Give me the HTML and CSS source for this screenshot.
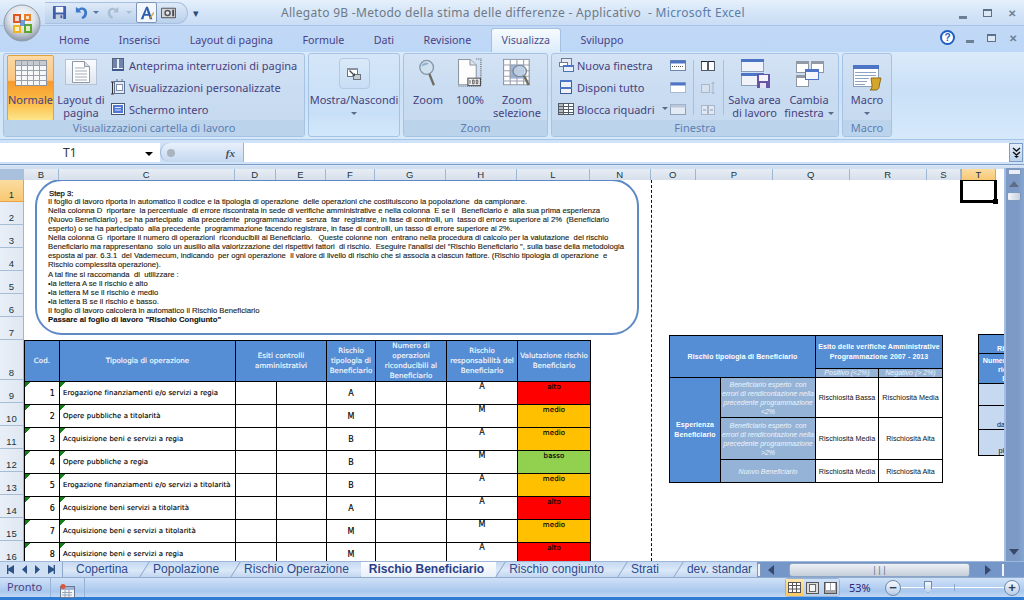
FILE: index.html
```html
<!DOCTYPE html>
<html lang="it">
<head>
<meta charset="utf-8">
<title>Microsoft Excel</title>
<link rel="stylesheet" href="styles.css">
</head>
<body>
<div class="window">
  <div class="officebtn">
    <svg width="38" height="38" viewBox="0 0 38 38"><defs><radialGradient id="orb" cx="50%" cy="35%" r="65%"><stop offset="0" stop-color="#fbfcfe"/><stop offset=".55" stop-color="#dfe4ea"/><stop offset="1" stop-color="#8b97a6"/></radialGradient></defs><circle cx="19" cy="19" r="18" fill="url(#orb)" stroke="#8d9bad"/><rect x="10" y="10" width="8" height="9" fill="#e2571e"/><rect x="12" y="12" width="4" height="5" fill="#f5d9c8"/><rect x="21" y="10" width="7" height="7" fill="#e8802a"/><rect x="23" y="12" width="3" height="3" fill="#fbe3c0"/><rect x="10" y="21" width="8" height="8" fill="#f3b21e"/><rect x="12" y="23" width="4" height="4" fill="#fdf1c6"/><rect x="21" y="20" width="8" height="9" fill="#5fa52e"/><rect x="23" y="22" width="4" height="5" fill="#dcefc4"/><rect x="17" y="16" width="5" height="6" fill="#3b78c9" opacity=".7"/></svg>
  </div>
  <header class="titlebar">
    <div class="qat">
      <svg class="qicon" width="15" height="15" viewBox="0 0 16 16"><rect x="1" y="1" width="14" height="14" rx="1" fill="#3f5fae"/><rect x="4" y="2" width="8" height="6" fill="#f4f6fb"/><rect x="4" y="10" width="8" height="5" fill="#c6cede"/><rect x="9" y="11" width="2" height="3" fill="#3f5fae"/></svg>
      <svg class="qicon undo" width="15" height="15" viewBox="0 0 16 16"><path d="M2 2v6h6L6 6c2-2 5-1 5 2 0 2-1 4-3 5l1 2c4-1 5-4 5-7 0-5-6-7-9-4z" fill="#3e78c8"/></svg>
      <span class="drop"></span>
      <svg class="qicon redo" width="14" height="15" viewBox="0 0 16 16"><path d="M14 2v6H8l2-2C8 4 5 5 5 8c0 2 1 4 3 5l-1 2C3 14 2 11 2 8c0-5 6-7 9-4z" fill="#a9bdd3"/></svg>
      <span class="drop dimdrop"></span>
      <span class="qframe"><svg width="18" height="18" viewBox="0 0 20 20"><path d="M3 17L9 3h2l5 14h-3l-1-4H7l-1 4z M8 11h3L9.600 6z" fill="#2e5fae" fill-rule="evenodd"/><path d="M13 15l4-6 1 1-4 6z" fill="#d9a32b"/></svg></span>
      <svg class="qicon" width="17" height="15" viewBox="0 0 18 16"><rect x="1" y="3" width="16" height="11" rx="1" fill="#55585e"/><rect x="2" y="4" width="14" height="9" fill="#d4d6d8"/><circle cx="8" cy="8.500" r="3.500" fill="#55585e"/><circle cx="8" cy="8.500" r="1.800" fill="#e7eaee"/><rect x="13" y="5" width="2" height="7" fill="#45484e"/></svg>
    </div>
    <span class="qatmore">▾</span>
    <h1 class="doctitle">Allegato 9B -Metodo della stima delle differenze - Applicativo &nbsp;- <span class="appname">Microsoft Excel</span></h1>
    <div class="winctl">
      <span class="wmin"></span><span class="wmax"></span><span class="wclose">✕</span>
    </div>
  </header>
  <nav class="tabs">
    <span class="tab">Home</span>
    <span class="tab">Inserisci</span>
    <span class="tab">Layout di pagina</span>
    <span class="tab">Formule</span>
    <span class="tab">Dati</span>
    <span class="tab">Revisione</span>
    <span class="tab active">Visualizza</span>
    <span class="tab">Sviluppo</span>
    <div class="docctl">
      <span class="help">?</span><span class="wmin"></span><span class="wmax"></span><span class="wclose">✕</span>
    </div>
  </nav>
  <section class="ribbon">
    <div class="group g1">
      <div class="gbody">
        <div class="big normal">
          <svg width="36" height="30" viewBox="0 0 36 30"><rect x="2.500" y=".5" width="31" height="25" fill="#f6f7f9" stroke="#8c939c"/><rect x="3" y="1" width="30" height="4" fill="#c6cbd2"/><path d="M2.500 5.500h31M2.500 10.500h31M2.500 15.500h31M2.500 20.500h31M8.500 0v26M14.500 0v26M20.500 0v26M26.500 0v26" stroke="#9aa1ab" fill="none"/></svg>
          <span>Normale</span>
        </div>
        <div class="big layoutp">
          <span class="pgframe"><svg width="18" height="22" viewBox="0 0 18 22"><path d="M.5.5h12l5 5v16H.5z" fill="#fff" stroke="#8f98a6"/><path d="M12.500.5v5h5" fill="#d9dee5" stroke="#8f98a6"/><path d="M3 7h10M3 10h12M3 13h12M3 16h12M3 19h12" stroke="#a5adb9"/></svg></span>
          <span>Layout di<br>pagina</span>
        </div>
        <div class="stack">
          <div class="sm"><svg width="16" height="16" viewBox="0 0 16 16"><rect x="2.500" y="1.500" width="11" height="12" fill="#e9edf2" stroke="#56617a"/><rect x="3" y="2" width="4" height="9" fill="#6d85ad"/><rect x="9" y="2" width="4" height="9" fill="#6d85ad"/><rect x="2" y="12" width="12" height="2" fill="#3f5a8c"/></svg><span>Anteprima interruzioni di pagina</span></div>
          <div class="sm"><svg width="16" height="16" viewBox="0 0 16 16"><rect x="4.500" y="2.500" width="10" height="12" fill="#e5ebf4" stroke="#5c7195"/><rect x="6.500" y="5.500" width="6" height="6" fill="#fff" stroke="#7f90ad"/><path d="M1 3h3M1 15h3M2.500 3v12" stroke="#333" fill="none"/><path d="M7 0v2M12 0v2" stroke="#5c7195"/></svg><span>Visualizzazioni personalizzate</span></div>
          <div class="sm"><svg width="16" height="16" viewBox="0 0 16 16"><rect x="1.500" y="2.500" width="13" height="11" fill="#fff" stroke="#47586f"/><rect x="3" y="4" width="10" height="8" fill="#5178d6"/><path d="M5 6.500h6M5 9h6" stroke="#dbe5fb"/></svg><span>Schermo intero</span></div>
        </div>
      </div>
      <div class="glabel">Visualizzazioni cartella di lavoro</div>
    </div>
    <div class="group g2">
      <div class="gbody">
        <div class="big mostra">
          <span class="mframe"><svg width="16" height="16" viewBox="0 0 16 16"><rect x="1.500" y="2.500" width="10" height="8" fill="#fff" stroke="#6b7380"/><path d="M1 2h11v2H1z" fill="#8b93a0"/><rect x="7.500" y="8.500" width="7" height="5" fill="#c6cbd2" stroke="#6b7380"/><path d="M3 5l4 4-1 1 3 0 0-3-1 1-4-4z" fill="#454c57"/></svg></span>
          <span>Mostra/Nascondi</span>
          <i class="caret"></i>
        </div>
      </div>
    </div>
    <div class="group g3">
      <div class="gbody">
        <div class="big zoomb">
          <svg width="20" height="30" viewBox="0 0 22 32" preserveAspectRatio="none"><circle cx="9.500" cy="10" r="7.500" fill="#cfe0ee" stroke="#8a97a5" stroke-width="1.500"/><path d="M4 9a5 5 0 0 1 8-3z" fill="#8fb1d2"/><path d="M12.500 17l5 12" stroke="#6f6a62" stroke-width="2.500"/></svg>
          <span>Zoom</span>
        </div>
        <div class="big cento">
          <svg width="25" height="30" viewBox="0 0 24 32" preserveAspectRatio="none"><path d="M.5 1.500h11l6 6v21H.5z" fill="#fdfdfe" stroke="#8e96a2"/><path d="M11.500 1.500v6h6" fill="#e0e4ea" stroke="#8e96a2"/><path d="M17.500 1H22v28M.5 30h22" stroke="#555" stroke-dasharray="1 1" fill="none"/><rect x="9.500" y="21.500" width="12" height="8" fill="#f0f1f2" stroke="#444"/><path d="M11.500 23.500v4M14 23.500h1.500v4H14zM17.500 23.500h1.500v4h-1.500z" stroke="#444" stroke-width=".8" fill="none"/></svg>
          <span>100%</span>
        </div>
        <div class="big zsel">
          <svg width="29" height="30" viewBox="0 0 26 32" preserveAspectRatio="none"><rect x=".5" y="1.500" width="23" height="27" fill="#fff" stroke="#8f96a1"/><rect x="6" y="7" width="12" height="15" fill="#9db5df"/><path d="M6.500 1v28M12.500 1v28M18.500 1v28M0 7.500h24M0 13.500h24M0 19.500h24M0 24.500h24" stroke="#9aa2ae" fill="none"/><circle cx="15" cy="14" r="6" fill="#c9dbec" fill-opacity=".7" stroke="#7d8792" stroke-width="1.300"/><path d="M19 19l4 10" stroke="#6f6a62" stroke-width="2.200"/></svg>
          <span>Zoom<br>selezione</span>
        </div>
      </div>
      <div class="glabel">Zoom</div>
    </div>
    <div class="group g4">
      <div class="gbody">
        <div class="stack stackf">
          <div class="sm"><svg width="16" height="16" viewBox="0 0 16 16"><rect x="3.500" y="1.500" width="10" height="7" fill="#e7eaf0" stroke="#6a7b98"/><rect x="1.500" y="5.500" width="8" height="4" fill="#fff" stroke="#6a7b98"/><rect x="5.500" y="8.500" width="10" height="6" fill="#e9f0fb" stroke="#4d74b5"/><rect x="5" y="8" width="11" height="2" fill="#4d74c5"/></svg><span>Nuova finestra</span></div>
          <div class="sm"><svg width="16" height="16" viewBox="0 0 16 16"><rect x="2.500" y="1.500" width="11" height="13" fill="#eef2f8" stroke="#3d5c97"/><rect x="2" y="1" width="12" height="2" fill="#4d74c5"/><rect x="2" y="8" width="12" height="2" fill="#4d74c5"/></svg><span>Disponi tutto</span></div>
          <div class="sm"><svg width="16" height="16" viewBox="0 0 16 16"><rect x=".5" y="2.500" width="15" height="11" fill="#fff" stroke="#525b66"/><path d="M1 5.500h14M1 8.500h14M1 11.500h14M5.500 2v12M10.500 2v12" stroke="#525b66"/><rect x="1" y="3" width="4" height="10" fill="#5d6672" opacity=".45"/></svg><span>Blocca riquadri</span><i class="caret inline"></i></div>
        </div>
        <div class="minis">
          <svg width="16" height="14" viewBox="0 0 16 14"><rect x=".5" y="1.500" width="15" height="10" fill="#fff" stroke="#6f86ab"/><rect x=".5" y="1.500" width="15" height="3" fill="#4d74c5"/><path d="M2 7.500h12" stroke="#555" stroke-dasharray="1 1"/></svg>
          <svg width="16" height="14" viewBox="0 0 16 14"><rect x=".5" y="1.500" width="15" height="10" fill="#fff" stroke="#6f86ab" stroke-dasharray="1 1"/><rect x=".5" y="1.500" width="15" height="3" fill="#4d74c5"/></svg>
          <svg width="16" height="14" viewBox="0 0 16 14"><rect x=".5" y="1.500" width="15" height="10" fill="#e4ebf4" stroke="#8ea0b8"/><rect x=".5" y="1.500" width="15" height="3" fill="#b9c7da"/></svg>
        </div>
        <span class="vsep"></span>
        <div class="minis">
          <svg width="16" height="14" viewBox="0 0 16 14"><rect x="1.500" y="2.500" width="6" height="9" fill="#fff" stroke="#505a68"/><rect x="8.500" y="2.500" width="6" height="9" fill="#fff" stroke="#505a68"/><path d="M1 2.500h6M8 2.500h6" stroke="#223"/></svg>
          <svg class="faded" width="16" height="14" viewBox="0 0 16 14"><rect x="1.500" y="3.500" width="8" height="8" fill="#dbe3ee" stroke="#a2afc0"/><path d="M13 1v12M11.500 3L13 1l1.500 2M11.500 11l1.500 2 1.500-2" stroke="#a2afc0" fill="none"/></svg>
          <svg class="faded" width="16" height="14" viewBox="0 0 16 14"><rect x="1.500" y="2.500" width="6" height="9" fill="#e6ecf4" stroke="#a2afc0"/><rect x="8.500" y="2.500" width="6" height="9" fill="#e6ecf4" stroke="#a2afc0"/><path d="M3 7h3M13 7H10" stroke="#7e8ea4"/></svg>
        </div>
        <span class="vsep"></span>
        <div class="big salva">
          <svg width="30" height="30" viewBox="0 0 30 30"><rect x="1.500" y="1.500" width="22" height="12" fill="#f0f4fa" stroke="#8c9db8"/><rect x="1" y="1" width="23" height="3" fill="#4d74c5"/><rect x="1.500" y="15.500" width="22" height="12" fill="#f0f4fa" stroke="#8c9db8"/><rect x="1" y="15" width="23" height="3" fill="#4d74c5"/><rect x="17" y="16" width="13" height="14" fill="#6655a5"/><rect x="19" y="17" width="9" height="6" fill="#f5f4fa"/><rect x="20" y="25" width="6" height="5" fill="#e3e0f0"/></svg>
          <span>Salva area<br>di lavoro</span>
        </div>
        <div class="big cambia">
          <svg width="29" height="30" viewBox="0 0 29 30"><rect x="1.500" y="3.500" width="12" height="11" fill="#fff" stroke="#8e96a2"/><rect x="1" y="3" width="13" height="3" fill="#9299a4"/><rect x="16.500" y="3.500" width="12" height="11" fill="#fff" stroke="#8e96a2"/><rect x="16" y="3" width="13" height="3" fill="#9299a4"/><rect x="1.500" y="17.500" width="12" height="11" fill="#fff" stroke="#8e96a2"/><rect x="1" y="17" width="13" height="3" fill="#9299a4"/><rect x="10.500" y="11.500" width="13" height="10" fill="#f3f7fd" stroke="#4d74c5"/><rect x="10" y="11" width="14" height="3" fill="#4d74c5"/></svg>
          <span>Cambia<br>finestra<i class="caret inline"></i></span>
        </div>
      </div>
      <div class="glabel">Finestra</div>
    </div>
    <div class="group g5">
      <div class="gbody">
        <div class="big macro">
          <svg width="30" height="26" viewBox="0 0 30 26"><rect x="1.500" y=".5" width="25" height="21" fill="#fff" stroke="#8c9db8"/><rect x="1" y="0" width="26" height="4" fill="#4d74c5"/><path d="M3 7.500h21M3 10.500h21M3 13.500h14M3 16.500h12M3 19.500h10" stroke="#8fa4c5"/><path d="M19 13h10l-1 4-1 5c0 2-2 3-3 3h-6c2-1 2-3 2-5z" fill="#d4a72c" stroke="#8d6d14"/></svg>
          <span>Macro</span>
          <i class="caret"></i>
        </div>
      </div>
      <div class="glabel">Macro</div>
    </div>
  </section>
  <div class="formula">
    <div class="namebox"><span class="cellname">T1</span><i class="blackdrop"></i></div>
    <div class="fxbox"><span class="fxknob"></span><em>fx</em></div>
    <div class="fxinput"></div>
    <div class="fxmore">
      <svg width="11" height="12" viewBox="0 0 11 12"><path d="M2 1l3.500 3L9 1M2 5l3.500 3L9 5" stroke="#111" stroke-width="1.400" fill="none"/><path d="M3 9l2.500 2L8 9z" fill="#111"/></svg>
    </div>
  </div>
  <div class="colheads">
    <span class="corner"></span>
    <span class="ch w35">B</span><span class="ch w176">C</span><span class="ch w41">D</span><span class="ch w50">E</span><span class="ch w49">F</span><span class="ch w71">G</span><span class="ch w71">H</span><span class="ch w73">L</span><span class="ch w61">N</span><span class="ch w45">O</span><span class="ch w77">P</span><span class="ch w77">Q</span><span class="ch w77">R</span><span class="ch w34">S</span><span class="ch w35 sel">T</span>
  </div>
  <div class="sheetbody">
    <div class="rowheads">
      <span class="rh r1 sel">1</span><span class="rh">2</span><span class="rh">3</span><span class="rh">4</span><span class="rh">5</span><span class="rh">6</span><span class="rh">7</span>
      <span class="rh r8">8</span><span class="rh">9</span><span class="rh">10</span><span class="rh">11</span><span class="rh">12</span><span class="rh">13</span><span class="rh">14</span><span class="rh">15</span><span class="rh">16</span>
    </div>
    <div class="canvas">
      <div class="shape">
<p class="line b0">Step 3:</p>
<p class="line">Il foglio di lavoro riporta in automatico il codice e la tipologia di operazione  delle operazioni che costituiscono la popolazione  da campionare.</p>
<p class="line">Nella colonna D  riportare  la percentuale  di errore riscontrata in sede di verifiche amministrative e nella colonna  E se il   Beneficiario è  alla sua prima esperienza</p>
<p class="line">(Nuovo Beneficiario) , se ha partecipato  alla precedente  programmazione  senza  far  registrare, in fase di controlli, un  tasso di errore superiore al 2%  (Beneficiario</p>
<p class="line">esperto) o se ha partecipato  alla precedente  programmazione facendo registrare, in fase di controlli, un tasso di errore superiore al 2%.</p>
<p class="line">Nella colonna G  riportare il numero di operazioni  riconducibili al Beneficiario.   Queste colonne non  entrano nella procedura di calcolo per la valutazione  del rischio</p>
<p class="line">Beneficiario ma rappresentano  solo un ausilio alla valorizzazione dei rispettivi fattori  di rischio.  Eseguire l'analisi del "Rischio Beneficiario ", sulla base della metodologia</p>
<p class="line">esposta al par. 6.3.1  del Vademecum, indicando  per ogni operazione  il valore di livello di rischio che si associa a ciascun fattore. (Rischio tipologia di operazione  e</p>
<p class="line">Rischio complessità operazione).</p>
<p class="line">A tal fine si raccomanda  di  utilizzare :</p>
<p class="line">•la lettera A se il rischio è alto</p>
<p class="line">•la lettera M se il rischio è medio</p>
<p class="line">•la lettera B se il rischio è basso.</p>
<p class="line">Il foglio di lavoro calcolerà in automatico il Rischio Beneficiario</p>
<p class="line strong">Passare al foglio di lavoro "Rischio Congiunto"</p>
      </div>
      <span class="pagebreak"></span>
      <span class="selection"></span>
      <table class="main">
        <colgroup><col class="w35"><col class="w176"><col class="w41"><col class="w50"><col class="w49"><col class="w71"><col class="w71"><col class="w73"></colgroup>
        <thead><tr>
          <th>Cod.</th><th>Tipologia di operazione</th><th colspan="2">Esiti controlli<br>amministrativi</th><th>Rischio<br>tipologia di<br>Beneficiario</th><th>Numero di<br>operazioni<br>riconducibili al<br>Beneficiario</th><th>Rischio<br>responsabilità del<br>Beneficiario</th><th>Valutazione rischio<br>Beneficiario</th>
        </tr></thead>
        <tbody>
          <tr><td class="num tri">1</td><td class="txt tri">Erogazione finanziamenti e/o servizi a regia</td><td></td><td></td><td class="c">A</td><td></td><td class="t">A</td><td class="t red">alto</td></tr>
          <tr><td class="num tri">2</td><td class="txt tri">Opere pubbliche a titolarità</td><td></td><td></td><td class="c">M</td><td></td><td class="t">M</td><td class="t ora">medio</td></tr>
          <tr><td class="num tri">3</td><td class="txt tri">Acquisizione beni e servizi a regia</td><td></td><td></td><td class="c">B</td><td></td><td class="t">A</td><td class="t ora">medio</td></tr>
          <tr><td class="num tri">4</td><td class="txt tri">Opere pubbliche a regia</td><td></td><td></td><td class="c">B</td><td></td><td class="t">M</td><td class="t gre">basso</td></tr>
          <tr><td class="num tri">5</td><td class="txt tri">Erogazione finanziamenti e/o servizi a titolarità</td><td></td><td></td><td class="c">B</td><td></td><td class="t">A</td><td class="t ora">medio</td></tr>
          <tr><td class="num tri">6</td><td class="txt tri">Acquisizione beni servizi a titolarità</td><td></td><td></td><td class="c">A</td><td></td><td class="t">A</td><td class="t red">alto</td></tr>
          <tr><td class="num tri">7</td><td class="txt tri">Acquisizione beni e servizi a titolarità</td><td></td><td></td><td class="c">M</td><td></td><td class="t">M</td><td class="t ora">medio</td></tr>
          <tr><td class="num tri">8</td><td class="txt tri">Acquisizione beni e servizi a regia</td><td></td><td></td><td class="c">M</td><td></td><td class="t">A</td><td class="t red">alto</td></tr>
        </tbody>
      </table>
      <table class="side">
        <colgroup><col class="w51"><col class="w95"><col class="w63"><col class="w64"></colgroup>
        <tr class="h33"><th colspan="2" rowspan="2">Rischio tipologia di Beneficiario</th><th colspan="2">Esito delle verifiche Amministrative<br>Programmazione 2007 - 2013</th></tr>
        <tr class="h9"><td class="sub">Positivo (&lt;2%)</td><td class="sub">Negativo (&gt; 2%)</td></tr>
        <tr class="h40"><th rowspan="3">Esperienza<br>Beneficiario</th><td class="sub">Beneficiario esperto  con<br>errori di rendicontazione nella<br>precedente programmazione<br>&lt;2%</td><td>Rischiosità Bassa</td><td>Rischiosità Media</td></tr>
        <tr class="h42"><td class="sub">Beneficiario esperto  con<br>errori di rendicontazione nella<br>precedente programmazione<br>&gt;2%</td><td>Rischiosità Media</td><td>Rischiosità Alta</td></tr>
        <tr class="h23"><td class="sub">Nuovo Beneficiario</td><td>Rischiosità Media</td><td>Rischiosità Alta</td></tr>
      </table>
      <table class="side2">
        <tr class="s19"><th>Rischio</th></tr>
        <tr class="s31"><th>Numero operaz.<br>ricond.<br>Ben.</th></tr>
        <tr class="s22"><td>1</td></tr>
        <tr class="s24"><td>da 2 a 5</td></tr>
        <tr class="s26"><td>più di 5</td></tr>
      </table>
    </div>
    <div class="vscroll">
      <span class="vsplit"></span>
      <span class="uparrow"></span>
      <span class="vthumb"></span>
      <span class="downarrow"></span>
    </div>
  </div>
  <div class="sheettabs">
    <div class="navs">
      <i class="nav first"></i><i class="nav prev"></i><i class="nav next"></i><i class="nav last"></i>
    </div>
    <div class="stabs">
      <span class="stab">Copertina</span>
      <span class="stab">Popolazione</span>
      <span class="stab">Rischio Operazione</span>
      <span class="stab current">Rischio Beneficiario</span>
      <span class="stab cong">Rischio congiunto</span>
      <span class="stab strati">Strati</span>
      <span class="stab">dev. standar</span>
    </div>
    <div class="hscroll">
      <span class="hsplit"></span>
      <i class="harrow left"></i>
      <span class="hthumb"><span class="grip">|||</span></span>
      <i class="harrow right"></i>
      <span class="hsplit end"></span>
    </div>
  </div>
  <footer class="status">
    <span class="pronto">Pronto</span>
    <span class="macrorec"><svg width="16" height="14" viewBox="0 0 16 14"><rect x="1.500" y="2.500" width="14" height="11" fill="#f3f5f9" stroke="#6b7a90"/><rect x="2" y="3" width="13" height="3" fill="#9fb4d6"/><path d="M3 8.500h10M3 11h10M6 6v7M10 6v7" stroke="#9aa6b8"/><circle cx="4" cy="2.500" r="2.500" fill="#e0553a"/></svg></span>
    <div class="views">
      <span class="view on"><svg width="13" height="11" viewBox="0 0 13 11"><rect x=".5" y=".5" width="12" height="10" fill="#fff" stroke="#555"/><path d="M0 3.500h13M0 7h13M4.500 0v11M8.500 0v11" stroke="#555"/></svg></span>
      <span class="view"><svg width="13" height="12" viewBox="0 0 13 12"><rect x=".5" y=".5" width="12" height="11" fill="#d9dbde" stroke="#555"/><rect x="3.500" y="2.500" width="6" height="7" fill="#f4f4f4" stroke="#666"/></svg></span>
      <span class="view"><svg width="13" height="12" viewBox="0 0 13 12"><rect x=".5" y=".5" width="12" height="11" fill="#a5a7aa" stroke="#555"/><rect x="2" y="1" width="4" height="7" fill="#fff"/><rect x="7" y="1" width="4" height="7" fill="#fff"/></svg></span>
    </div>
    <span class="zoomval">53%</span>
    <div class="slider">
      <span class="round">−</span>
      <span class="track"><span class="tick"></span><span class="knob"></span></span>
      <span class="round">+</span>
    </div>
  </footer>
</div>
</body>
</html>
```
FILE: styles.css
```css
* { box-sizing: border-box; }
html, body { margin: 0; padding: 0; background: #fff; }
body { font-family: "Noto Sans", "Liberation Sans", sans-serif; }
.window { position: relative; width: 1024px; height: 600px; overflow: hidden; display: flex; flex-direction: column; background: #bfdbff; }
.officebtn { position: absolute; left: 3px; top: 4px; width: 38px; height: 38px; z-index: 5; }

/* Title */
.titlebar { height: 26px; flex: none; display: flex; align-items: center; background: linear-gradient(#e6f0fb, #d6e6f8 45%, #c9ddf4); border-bottom: 1px solid #a9c6ea; padding-left: 45px; }
.qat { display: flex; align-items: center; height: 22px; width: 143px; padding-left: 7px; background: linear-gradient(#dfeaf8, #b9d0ec); border: 1px solid #a9c1e0; border-left: 0; border-radius: 0 12px 12px 0; }
.qicon.undo { margin-left: 7px; }
.qicon.redo { margin-left: 7px; }
.drop { width: 0; height: 0; border: 3px solid transparent; border-top: 3px solid #5277a8; border-bottom: 0; margin-left: 4px; }
.dimdrop { border-top-color: #a9bdd3; margin-left: 6px; }
.qframe { display: flex; align-items: center; justify-content: center; width: 21px; height: 21px; margin: 0 3px 0 4px; background: #f2f7fd; border: 1px solid #7f96b8; border-radius: 2px; }
.qatmore { font-size: 11px; color: #2b4a7a; margin-left: 5px; width: 18px; }
.doctitle { margin: 0 0 0 70px; font-weight: 400; font-size: 12px; letter-spacing: .3px; color: #6f7a86; white-space: nowrap; }
.appname { color: #5b7da6; }
.winctl { position: absolute; right: 8px; top: 7px; display: flex; align-items: center; gap: 16px; }
.docctl { margin-left: auto; margin-right: 7px; display: flex; align-items: center; gap: 13px; align-self: center; margin-top: -3px; }
.wmin { width: 8px; height: 3px; margin-top: 8px; background: #6d7f95; }
.wmax { width: 9px; height: 8px; background: #dde8f5; border: 1px solid #5d7089; border-top-width: 2px; }
.wclose { font-size: 10px; font-weight: 700; line-height: 12px; color: #6d7f95; }
.help { width: 15px; height: 15px; margin-right: -2px; border-radius: 50%; border: 2px solid #1f5fbf; background: #fff; color: #1f5fbf; font: 700 10px/11px "Liberation Sans", sans-serif; text-align: center; }

/* Tabs */
.tabs { height: 26px; flex: none; display: flex; align-items: flex-end; padding-left: 59px; gap: 29.400px; background: linear-gradient(#c2d9f5, #bdd7f8); }
.tab { font-size: 10.700px; line-height: 24px; color: #4b3f85; white-space: nowrap; }
.tab.active { margin-left: -10px; margin-right: -10px; padding: 0 10px; height: 24px; line-height: 23px; background: linear-gradient(#f6fbff, #ddecfb); border: 1px solid #a4c0e2; border-bottom: 0; border-radius: 3px 3px 0 0; color: #4a4f8d; }

/* Ribbon */
.ribbon { height: 88px; flex: none; display: flex; gap: 3px; padding: 1px 0 3px 3px; background: linear-gradient(#dbeafa, #c9e0f7 45%, #d6e9fb 100%); border-bottom: 1px solid #a5c3e6; }
.group { height: 84px; display: flex; flex-direction: column; border: 1px solid #a7c3e3; border-radius: 3px; background: linear-gradient(#d4e3f5, #c9dcf1 45%, #c5d9f0); overflow: hidden; }
.gbody { flex: 1; display: flex; min-height: 0; }
.glabel { height: 16px; flex: none; text-align: center; font-size: 11px; line-height: 15px; color: #5d7fb3; background: #bcd3ec; }
.g1 { width: 302px; }
.g2 { width: 92px; background: linear-gradient(#d5e6f8, #c7dff7 70%, #d3e8fb); }
.g3 { width: 145px; }
.g4 { width: 288px; }
.g5 { width: 50px; }
.big { display: flex; flex-direction: column; align-items: center; font-size: 11px; line-height: 13px; color: #47427f; text-align: center; white-space: nowrap; }
.big > svg { flex: none; }
.normal { width: 47px; height: 66px; margin: 1px 0 0 3px; padding-top: 4px; background: linear-gradient(#fcd9a5 0, #fbc57f 38%, #f79a2d 40%, #fbc04a 75%, #fde58a 100%); border: 1px solid #e0a33c; border-radius: 2px; }
.normal span { margin-top: 3px; }
.layoutp { width: 46px; margin-left: 4px; padding-top: 5px; }
.pgframe { width: 32px; height: 26px; display: flex; align-items: center; justify-content: center; background: linear-gradient(#fafcff, #dfe6ef); border: 1px solid #b7c3d2; margin-bottom: 8px; }
.stack { display: flex; flex-direction: column; gap: 6px; padding: 3px 0 0 6px; }
.sm { display: flex; align-items: center; gap: 3px; height: 16px; font-size: 11px; color: #47427f; white-space: nowrap; }
.mostra { width: 90px; padding-top: 4px; }
.mframe { width: 31px; height: 31px; display: flex; align-items: center; justify-content: center; border: 1px solid #b2cae6; border-radius: 4px; background: linear-gradient(#dae9f9, #c8def5); margin-bottom: 4px; }
.caret { display: block; width: 0; height: 0; border: 3px solid transparent; border-top: 3px solid #5a6a8c; border-bottom: 0; margin-top: 6px; }
.caret.inline { display: inline-block; margin: 0 0 2px 4px; vertical-align: middle; }
.zoomb, .cento, .zsel, .salva, .cambia { padding-top: 4px; }
.zoomb span, .cento span, .zsel span, .salva span, .cambia span { margin-top: 5px; }
.zoomb { width: 36px; margin-left: 6px; }
.cento { width: 34px; margin-left: 7px; }
.zsel { width: 50px; margin-left: 5px; }
.stackf { width: 118px; flex: none; }
.minis { display: flex; flex-direction: column; gap: 8px; padding-top: 5px; width: 16px; flex: none; }
.faded { opacity: .8; }
.vsep { width: 1px; height: 55px; margin: 6px 6px 0 7px; flex: none; background: #a9bfd8; }
.salva { width: 51px; margin-left: -1px; flex: none; }
.cambia { width: 48px; margin-left: 5px; flex: none; }
.macro { width: 48px; padding-top: 11px; }
.macro span { margin-top: 2px; }

/* Formula */
.formula { height: 25px; flex: none; display: flex; align-items: stretch; padding: 3px 1px 2px 0; background: #cfe2f7; border-bottom: 1px solid #7c9cc4; }
.namebox { width: 160px; flex: none; display: flex; align-items: center; background: #fff; position: relative; padding-left: 63px; font-size: 12px; color: #333; }
.blackdrop { position: absolute; left: 145px; top: 9px; width: 0; height: 0; border: 4px solid transparent; border-top: 4px solid #000; border-bottom: 0; }
.fxbox { width: 84px; flex: none; display: flex; align-items: center; justify-content: space-between; padding: 0 8px 0 6px; background: linear-gradient(#e8f0fa, #c4d8f0); border: 1px solid #9bb3d2; border-width: 0 1px 0 1px; border-radius: 10px 0 0 10px; }
.fxknob { width: 8px; height: 8px; border-radius: 50%; background: #aab4c0; }
.fxbox em { font: italic 700 11px "Liberation Serif", serif; color: #44505e; }
.fxinput { flex: 1; background: #fff; }
.fxmore { width: 14px; flex: none; display: flex; align-items: center; justify-content: center; background: linear-gradient(#e4eefa, #bdd3ee); border: 1px solid #7c9cc4; }

/* Headers */
.colheads { height: 15px; flex: none; display: flex; padding-top: 3px; background: linear-gradient(#d0dff1 0 3px, #fff 3px); position: relative; border-top: 1px solid #dbe8f7; }
.corner { width: 24px; flex: none; background: #a8c0dc; }
.ch { flex: none; height: 11px; text-align: center; font: 9.500px/11px "Liberation Sans", sans-serif; letter-spacing: .4px; color: #16343c; background: linear-gradient(#e8edf4, #d6dfeb); border-right: 1px solid #9fb6d2; }
.ch.sel { background: linear-gradient(#fbdca0, #f8c873); border: 1px solid #eda044; border-width: 0 1px; }
.w34 { width: 34px; } .w35 { width: 35px; } .w41 { width: 41px; } .w45 { width: 45px; } .w49 { width: 49px; } .w50 { width: 50px; } .w51 { width: 51px; } .w61 { width: 61px; } .w63 { width: 63px; } .w64 { width: 64px; } .w71 { width: 71px; } .w73 { width: 73px; } .w77 { width: 77px; } .w95 { width: 95px; } .w176 { width: 176px; }

.sheetbody { flex: 1; min-height: 0; display: flex; background: #fff; }
.rowheads { width: 24px; flex: none; overflow: hidden; }
.rh { height: 23px; flex: none; font: 9.500px/12px "Liberation Sans", sans-serif; letter-spacing: .3px; color: #16343c; display: flex; justify-content: center; align-items: flex-end; background: linear-gradient(90deg, #e9eff7, #dfe7f2); border-bottom: 1px solid #a7bdd6; border-right: 1px solid #9fb6d2; }
.rh.sel { background: linear-gradient(#fbdca0, #f8c873); border-bottom-color: #eda044; border-right-color: #eda044; }
.rh.r1 { height: 22px; }
.rh.r8 { height: 40px; }

.canvas { position: relative; flex: 1; min-width: 0; overflow: hidden; background: #fff; }
.shape { position: absolute; left: 11px; top: -1px; width: 604px; height: 156px; padding: 8px 0 0 11px; border: 2px solid #5d8ac4; border-radius: 27px; background: #fff; }
.line { margin: 0; height: 9.070px; font: 7.700px/9px "Liberation Sans", sans-serif; color: #1f1b10; white-space: pre; -webkit-text-stroke: .12px #1f1b10; }
.line.b0 { margin-left: 1px; color: #111; height: 8px; -webkit-text-stroke: .25px #111; }
.line.strong { font-weight: 700; color: #111; }
.pagebreak { position: absolute; left: 627px; top: 0; height: 381px; border-left: 1px dashed #111; }
.selection { position: absolute; left: 936px; top: 0; width: 37px; height: 23px; border: 3px solid #000; border-top-width: 1px; }
.selection::after { content: ""; position: absolute; right: -4px; bottom: -4px; width: 5px; height: 5px; background: #000; }

table { border-collapse: collapse; table-layout: fixed; }
.main { position: absolute; left: 0; top: 160px; width: 566px; font-family: "DejaVu Sans", sans-serif; }
.main th, .main td { border: 1px solid #000; padding: 0; overflow: hidden; white-space: nowrap; }
.main thead tr { height: 40px; }
.main th { background: #558ed5; color: #fff; font-weight: 400; font-size: 7.100px; line-height: 10px; letter-spacing: .05px; text-align: center; -webkit-text-stroke: .12px #fff; }
.main tbody tr { height: 23px; }
.main td { font-size: 6.900px; color: #000; letter-spacing: .1px; -webkit-text-stroke: .15px #000; }
.main td.num { text-align: right; padding-right: 4px; font-size: 8px; }
.main td.txt { padding-left: 3px; }
.main td.c { text-align: center; font-size: 8px; }
.main td.t { text-align: center; vertical-align: top; line-height: 10px; font-size: 8px; }
.tri { background: linear-gradient(135deg, #15801a 4px, transparent 4px) no-repeat; }
.main td.red { background: #f00; font-size: 7px; }
.main td.ora { background: #ffc000; font-size: 7px; }
.main td.gre { background: #92d050; font-size: 7px; }

.side { position: absolute; left: 645px; top: 155px; width: 273px; font-family: "Liberation Sans", sans-serif; }
.side th, .side td { border: 1px solid #000; padding: 0; text-align: center; overflow: hidden; white-space: pre; }
.side th { background: #558ed5; color: #fff; font-size: 7px; line-height: 10px; font-weight: 700; letter-spacing: .1px; }
.side td { font-size: 7.200px; color: #111; line-height: 9px; }
.side td.sub { background: #95b3d7; color: #eef3fa; font-style: italic; font-size: 7px; line-height: 9px; }
.h33 { height: 33px; } .h9 { height: 9px; } .h40 { height: 40px; } .h42 { height: 42px; } .h23 { height: 23px; }
.side .h9 td { font-size: 7px; line-height: 8px; }

.side2 { position: absolute; left: 954px; top: 154px; width: 64px; font-family: "Liberation Sans", sans-serif; }
.side2 th, .side2 td { border: 1px solid #000; padding: 0; text-align: center; vertical-align: bottom; overflow: hidden; white-space: nowrap; font-size: 7.200px; line-height: 9px; }
.side2 th { background: #558ed5; color: #fff; }
.side2 td { background: #c6d9f1; color: #111; }
.s19 { height: 19px; } .s31 { height: 30px; } .s22 { height: 22px; } .s24 { height: 24px; } .s26 { height: 26px; }

.vscroll { position: absolute; right: 0; top: 168px; bottom: 39px; width: 20px; display: flex; flex-direction: column; align-items: center; background: linear-gradient(90deg, #a4bde2 0 2px, #7d9ac6 2px, #7d9ac6 70%, #87a6d2); }
.vsplit { width: 13px; height: 6px; margin-top: 1px; background: #e9eff8; border: 1px solid #7f98bd; }
.uparrow { width: 0; height: 0; margin-top: 6px; border: 5px solid transparent; border-top: 0; border-bottom: 6px solid #5e6e86; }
.vthumb { width: 14px; height: 9px; margin-top: 5px; background: linear-gradient(90deg, #f3f5f8, #c8d1dd); border: 1px solid #7f98bd; border-radius: 2px; }
.downarrow { width: 0; height: 0; margin-top: auto; margin-bottom: 6px; border: 5px solid transparent; border-bottom: 0; border-top: 6px solid #38486a; }

/* Sheet tabs */
.sheettabs { height: 17px; flex: none; display: flex; align-items: stretch; background: #cfe0f5; border-top: 1px solid #9db7d8; border-bottom: 1px solid #8fabd0; }
.navs { width: 63px; flex: none; display: flex; align-items: center; justify-content: space-around; padding: 0 3px; border-right: 1px solid #8fa9cd; }
.nav { display: block; width: 7px; height: 9px; background: #2c5288; }
.prev { width: 5px; clip-path: polygon(100% 0, 100% 100%, 0 50%); }
.next { width: 5px; clip-path: polygon(0 0, 0 100%, 100% 50%); }
.first { clip-path: polygon(0 0, 20% 0, 20% 40%, 100% 0, 100% 100%, 20% 60%, 20% 100%, 0 100%); }
.last { clip-path: polygon(100% 0, 80% 0, 80% 40%, 0 0, 0 100%, 80% 60%, 80% 100%, 100% 100%); }
.stabs { flex: 1; min-width: 0; overflow: hidden; display: flex; align-items: stretch; background: linear-gradient(#c6d9f2, #dbe8f8 55%, #c2d6f0); white-space: nowrap; }
.stab { position: relative; font: 12px/15px "Liberation Sans", sans-serif; color: #2c4a8f; padding: 0 12px 0 13px; }
.stab::after { content: ""; position: absolute; top: 0; bottom: 0; right: -5px; width: 10px; transform: skewX(-32deg); border-right: 1px solid #8aa5cc; }
.stab.current { padding-left: 8px; background: linear-gradient(#fff, #e6effa); font-weight: 700; color: #2a3f88; }
.stab.cong { padding-right: 14px; }
.stab.strati { padding-right: 15px; }
.hscroll { flex: none; width: 267px; display: flex; align-items: center; background: #7496c8; }
.hsplit { width: 4px; height: 14px; background: #eef3fa; border: 1px solid #7f98bd; }
.hsplit.end { margin-left: 10px; }
.harrow { display: block; width: 0; height: 0; border: 5px solid transparent; }
.harrow.left { border-left: 0; border-right: 6px solid #38486a; margin-left: 7px; margin-right: 15px; }
.harrow.right { border-right: 0; border-left: 6px solid #38486a; margin-left: 15px; }
.hthumb { width: 181px; height: 14px; display: flex; align-items: center; justify-content: center; background: linear-gradient(#eef1f5, #c5ced9); border: 1px solid #8ba4c6; border-radius: 3px; }
.grip { font-size: 9px; line-height: 12px; color: #5a6a7e; }

/* Status */
.status { height: 22px; flex: none; display: flex; align-items: flex-start; background: linear-gradient(#cfe1f7, #a9c8ee 60%, #c2d8f4 86%, #2d7bd3 86%, #2d7bd3); }
.pronto { width: 51px; height: 19px; padding-left: 7px; font-size: 11px; line-height: 18px; color: #4b3f85; border-right: 1px solid #96b3d6; }
.macrorec { width: 34px; height: 19px; padding: 3px 0 0 8px; border-right: 1px solid #96b3d6; }
.views { margin-left: auto; display: flex; height: 19px; width: 55px; border: 1px solid #96b3d6; border-radius: 3px; }
.view { flex: 1; display: flex; align-items: center; justify-content: center; background: linear-gradient(#cfe1f7, #b6cfee); }
.view.on { background: linear-gradient(#fde6ae, #fbc960); }
.zoomval { width: 45px; padding-left: 9px; font-size: 11px; line-height: 19px; color: #30256f; }
.slider { width: 139px; height: 19px; display: flex; align-items: center; padding-right: 4px; }
.round { width: 16px; height: 16px; flex: none; border-radius: 50%; border: 1px solid #6f8aab; background: linear-gradient(#f6f9fd, #b9cde6); font: 700 13px/13px "Liberation Sans", sans-serif; text-align: center; color: #2d3f58; }
.track { flex: 1; height: 1px; background: #fff; position: relative; }
.tick { position: absolute; left: 51%; top: -3px; width: 1px; height: 7px; background: #8ea7c6; }
.knob { position: absolute; left: 23px; top: -6px; width: 8px; height: 12px; background: linear-gradient(#f6f9fd, #c3d4ea); border: 1px solid #6f8aab; clip-path: polygon(0 0, 100% 0, 100% 60%, 50% 100%, 0 60%); }
```
